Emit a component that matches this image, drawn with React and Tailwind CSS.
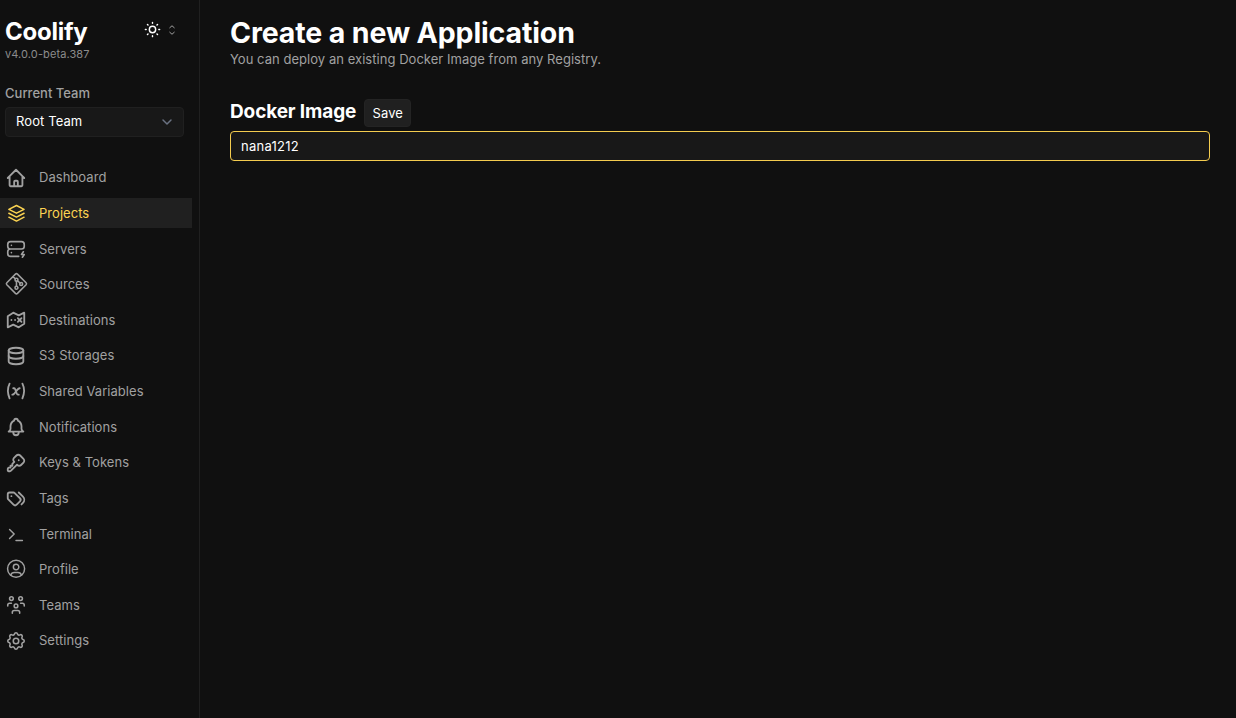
const NAV = [
  { label: "Dashboard", width: 2, d: ["m3 12 2-2m0 0 7-7 7 7M5 10v10a1 1 0 0 0 1 1h3m10-11 2 2m-2-2v10a1 1 0 0 1-1 1h-3m-6 0a1 1 0 0 0 1-1v-4a1 1 0 0 1 1-1h2a1 1 0 0 1 1 1v4a1 1 0 0 0 1 1m-6 0h6"] },
  { label: "Projects", width: 1.6, active: true, d: ["M12.5 3.8 4.2 8l8.3 4.2L20.8 8l-8.3-4.2", "m4.2 12.3 8.3 4.2 8.3-4.2", "m4.2 16.6 8.3 4.2 8.3-4.2"] },
  { label: "Servers", width: 1.8, d: ["M3 7a3 3 0 0 1 3-3h12a3 3 0 0 1 3 3v2a3 3 0 0 1-3 3H6a3 3 0 0 1-3-3zM15 20H6a3 3 0 0 1-3-3v-2a3 3 0 0 1 3-3h12M7 8v.01M7 16v.01M20 15l-2 3h3l-2 3"] },
  { label: "Sources", width: 1.7, d: ["M11.4 1.2 2 10.6a1.6 1.6 0 0 0 0 2.2l9.4 9.4a1.6 1.6 0 0 0 2.2 0l9.4-9.4a1.6 1.6 0 0 0 0-2.2l-9.4-9.4a1.6 1.6 0 0 0-2.2 0ZM8.8 4l2.3 2.3M12.5 8.9v5.6M13.7 8.5l2.8 2.5", "M10.9 7.3a1.6 1.6 0 1 0 3.2 0a1.6 1.6 0 1 0-3.2 0M10.9 16.1a1.6 1.6 0 1 0 3.2 0a1.6 1.6 0 1 0-3.2 0M16 12a1.6 1.6 0 1 0 3.2 0a1.6 1.6 0 1 0-3.2 0"] },
  { label: "Destinations", width: 2, d: ["M9 4 3 8v12l6-3 6 3 6-4V4l-6 3-6-3zm-2 8.001V12m4 .001V12m3-2 2 2m2 2-2-2m0 0 2-2m-2 2-2 2"] },
  { label: "S3 Storages", width: 2, d: ["M4 6a8 3 0 1 0 16 0A8 3 0 1 0 4 6", "M4 6v6a8 3 0 0 0 16 0V6", "M4 12v6a8 3 0 0 0 16 0v-6"] },
  { label: "Shared Variables", width: 2, d: ["M5 4C2.5 9 2.5 14 5 20M19 4c2.5 5 2.5 10 0 16M9 9h1c1 0 1 1 2.016 3.527C13 15 13 16 14 16h1", "M8 16c1.5 0 3-2 4-3.5S14.5 9 16 9"] },
  { label: "Notifications", width: 2, d: ["M10 5a2 2 0 1 1 4 0 7 7 0 0 1 4 6v3a4 4 0 0 0 2 3H4a4 4 0 0 0 2-3v-3a7 7 0 0 1 4-6M9 17v1a3 3 0 0 0 6 0v-1"] },
  { label: "Keys & Tokens", width: 2, d: ["m16.555 3.843 3.602 3.602a2.877 2.877 0 0 1 0 4.069l-2.643 2.643a2.877 2.877 0 0 1-4.069 0l-.301-.301-6.558 6.558a2 2 0 0 1-1.239.578L5.172 21H4a1 1 0 0 1-.993-.883L3 20v-1.172a2 2 0 0 1 .467-1.284l.119-.13L4 17h2v-2h2v-2l2.144-2.144-.301-.301a2.877 2.877 0 0 1 0-4.069l2.643-2.643a2.877 2.877 0 0 1 4.069 0zM15 9h.01"] },
  { label: "Tags", width: 2, d: ["M3 8v4.172a2 2 0 0 0 .586 1.414l5.71 5.71a2.41 2.41 0 0 0 3.408 0l3.592-3.592a2.41 2.41 0 0 0 0-3.408l-5.71-5.71A2 2 0 0 0 9.172 6H5a2 2 0 0 0-2 2", "m18 19 1.592-1.592a4.82 4.82 0 0 0 0-6.816L15 6M7 10h-.01"] },
  { label: "Terminal", width: 1.6, d: ["m5 7 5 5-5 5m7 2h7"] },
  { label: "Profile", width: 1.6, d: ["M2.8 11.8a9.3 9.3 0 1 0 18.6 0 9.3 9.3 0 1 0-18.6 0", "M9.1 9.8a3 3 0 1 0 6 0 3 3 0 1 0-6 0m-2.832 8.849A4 4 0 0 1 10.1 15.8h4a4 4 0 0 1 3.834 2.855"] },
  { label: "Teams", width: 1.7, d: ["M10 13a2 2 0 1 0 4 0 2 2 0 0 0-4 0m-2 8v-1a2 2 0 0 1 2-2h4a2 2 0 0 1 2 2v1M15 5a2 2 0 1 0 4 0 2 2 0 0 0-4 0m2 5h2a2 2 0 0 1 2 2v1M5 5a2 2 0 1 0 4 0 2 2 0 0 0-4 0m-2 8v-1a2 2 0 0 1 2-2h2"] },
  { label: "Settings", width: 1.7, d: ["M10.325 4.317c.426-1.756 2.924-1.756 3.35 0a1.724 1.724 0 0 0 2.573 1.066c1.543-.94 3.31.826 2.37 2.37a1.724 1.724 0 0 0 1.065 2.572c1.756.426 1.756 2.924 0 3.35a1.724 1.724 0 0 0-1.066 2.573c.94 1.543-.826 3.31-2.37 2.37a1.724 1.724 0 0 0-2.572 1.065c-.426 1.756-2.924 1.756-3.35 0a1.724 1.724 0 0 0-2.573-1.066c-1.543.94-3.31-.826-2.37-2.37a1.724 1.724 0 0 0-1.065-2.572c-1.756-.426-1.756-2.924 0-3.35a1.724 1.724 0 0 0 1.066-2.573c-.94-1.543.826-3.31 2.37-2.37 1 .608 2.296.07 2.572-1.065", "M9 12a3 3 0 1 0 6 0 3 3 0 0 0-6 0"] },
];

function Icon({ paths, width, className }) {
  return (
    <svg viewBox="0 0 24 24" fill="none" stroke="currentColor" strokeWidth={width} strokeLinecap="round" strokeLinejoin="round" className={className}>
      {paths.map((d) => <path key={d} d={d} />)}
    </svg>
  );
}

function NavItem({ item }) {
  return (
    <li>
      <a className={`flex h-[29.7px] w-[192px] items-center gap-[11.6px] pt-[1.6px] pl-[5.4px] ${item.active ? "bg-[#202020] text-[#fcd452]" : "text-neutral-400"}`}>
        <Icon paths={item.d} width={item.width} className="mb-[1px] size-[22px] shrink-0 overflow-visible" />
        <span className="text-[13px] tracking-[0.04px]">{item.label}</span>
      </a>
    </li>
  );
}

function Sidebar() {
  return (
    <aside className="flex w-[200px] shrink-0 flex-col border-r border-[#202020]">
      <header className="flex h-[85px] justify-between pt-[17px] pr-[21px] pl-[5px]">
        <div>
          <div className="text-[24px] leading-[29px] font-bold tracking-[-0.25px] text-white">Coolify</div>
          <div className="text-[11px] leading-[16px] tracking-[0.1px] text-[#8c8c8c]">v4.0.0-beta.387</div>
        </div>
        <button className="flex h-[25px] items-center gap-[4px] text-white">
          <Icon width={1.8} className="size-[19px]" paths={["M12 3v1m0 16v1m9-9h-1M4 12H3m15.364-6.364-.707.707M6.343 17.657l-.707.707m12.728 0-.707-.707M6.343 6.343l-.707-.707M16 12a4 4 0 1 1-8 0 4 4 0 0 1 8 0"]} />
          <Icon width={2} className="size-[12px] text-neutral-400" paths={["M7.5 7.5 12 3.5l4.5 4M7.5 16.5l4.5 4 4.5-4"]} />
        </button>
      </header>
      <div className="pr-[15px] pl-[5px]">
        <label className="block h-[22px] text-[13px] leading-[17px] font-medium tracking-[0.02px] text-neutral-400">Current Team</label>
        <div className="flex h-[30px] items-center justify-between rounded-[4px] border border-[#202020] bg-[#181818] pr-[8px] pl-[10px] text-[13px] text-white">
          <span className="tracking-[0.1px]">Root Team</span>
          <Icon width={2.2} className="size-[16px] text-gray-500" paths={["m6 9 6 6 6-6"]} />
        </div>
      </div>
      <ul className="mt-[25.4px] flex flex-col gap-[5.95px]">
        {NAV.map((item) => <NavItem key={item.label} item={item} />)}
      </ul>
    </aside>
  );
}

export default function App() {
  return (
    <div className="flex h-screen overflow-hidden bg-[#101010] font-['Inter',sans-serif]">
      <Sidebar />
      <main className="flex-1 pt-[17px] pr-[26px] pl-[30px]">
        <h1 className="text-[28.5px] leading-[32px] font-bold tracking-[-0.13px] text-white">Create a new Application</h1>
        <p className="text-[13px] leading-[20px] tracking-[0.04px] text-neutral-400">You can deploy an existing Docker Image from any Registry.</p>
        <form className="pt-[30px]">
          <div className="flex h-[32px] gap-[8px]">
            <h2 className="text-[19px] leading-[25px] font-bold tracking-[-0.12px] text-white">Docker Image</h2>
            <button type="button" className="h-[28px] w-[47px] rounded-[4px] border border-[#242424] bg-[#202020] pt-[2px] text-[13px] tracking-[0.1px] text-white">Save</button>
          </div>
          <input className="block h-[30px] w-full rounded-[4px] border border-[#f4cc4f] bg-[#181818] px-[10px] text-[13px] tracking-[0.26px] text-white outline-none" defaultValue="nana1212" />
        </form>
      </main>
    </div>
  );
}
